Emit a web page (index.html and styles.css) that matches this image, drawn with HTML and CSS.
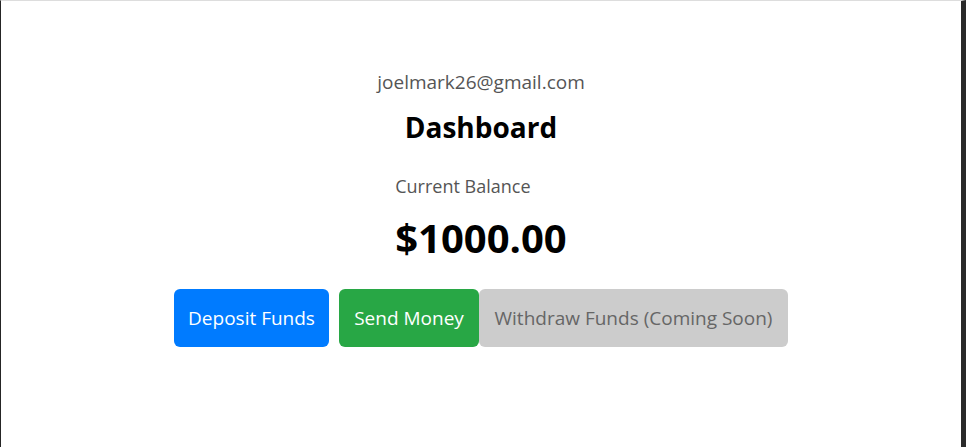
FILE: index.html
```html
<!DOCTYPE html>
<html lang="en">
<head>
<meta charset="utf-8">
<title>Dashboard</title>
<link rel="stylesheet" href="styles.css">
</head>
<body>
<div class="frame">
  <main class="dashboard">
    <p class="email">joelmark26@gmail.com</p>
    <h1 class="title">Dashboard</h1>
    <div class="balance">
      <p class="balance-label">Current Balance</p>
      <p class="balance-amount">$1000.00</p>
    </div>
    <div class="actions">
      <button class="btn btn-deposit">Deposit Funds</button>
      <button class="btn btn-send">Send Money</button>
      <button class="btn btn-withdraw" disabled>Withdraw Funds (Coming Soon)</button>
    </div>
  </main>
</div>
</body>
</html>
```
FILE: styles.css
```css
html, body {
  margin: 0;
  padding: 0;
  background: #ffffff;
}

.frame {
  box-sizing: border-box;
  height: 447px;
  width: 966px;
  border-left: 1px solid #252525;
  border-top: 1px solid #dddddd;
  border-right: 5px solid #2a2a2a;
  font-family: "Open Sans", "Noto Sans", sans-serif;
}

.dashboard {
  display: flex;
  flex-direction: column;
  align-items: center;
  padding-top: 69px;
}

.email {
  margin: 0;
  font-size: 19px;
  line-height: 24px;
  color: #555555;
}

.title {
  margin: 16px 0 0;
  font-size: 28px;
  line-height: 34px;
  font-weight: 700;
  color: #000000;
}

.balance {
  margin-top: 30px;
  display: flex;
  flex-direction: column;
  align-items: flex-start;
}

.balance-label {
  margin: 0;
  font-size: 18px;
  line-height: 24px;
  color: #555555;
}

.balance-amount {
  margin: 18px 0 0;
  font-size: 40px;
  line-height: 44px;
  font-weight: 700;
  color: #000000;
}

.actions {
  margin-top: 29px;
  display: flex;
}

.btn {
  height: 58px;
  padding: 0;
  border: none;
  border-radius: 6px;
  font-family: inherit;
  font-size: 19px;
  white-space: nowrap;
  color: #ffffff;
}

.btn-deposit {
  background: #007bff;
  width: 155px;
  margin-right: 10px;
}

.btn-send {
  background: #28a745;
  width: 140px;
}

.btn-withdraw {
  background: #cccccc;
  color: #666666;
  width: 309px;
}
```
